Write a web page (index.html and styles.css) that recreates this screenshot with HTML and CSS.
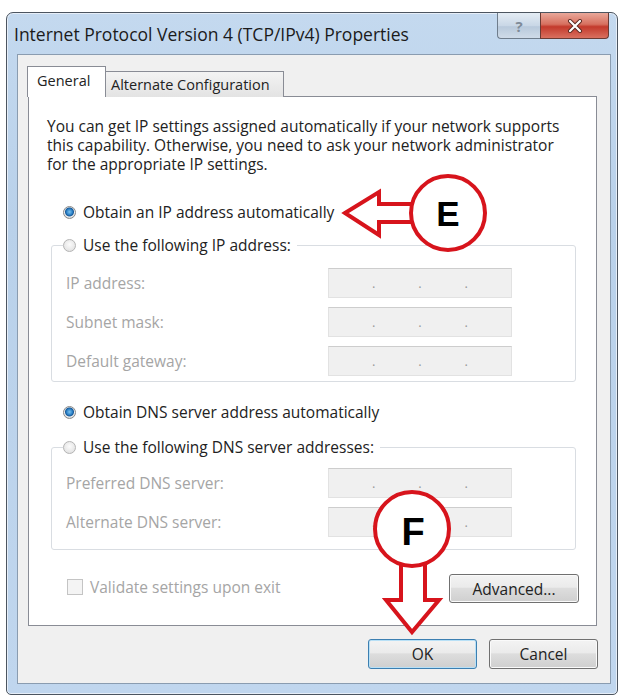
FILE: index.html
```html
<!DOCTYPE html>
<html>
<head>
<meta charset="utf-8">
<link rel="stylesheet" href="styles.css">
</head>
<body>
<div class="window">
  <div class="titlebar">
    <div class="title">Internet Protocol Version 4 (TCP/IPv4) Properties</div>
    <div class="controls">
      <div class="cbtn help">?</div>
      <div class="cbtn close">
        <svg width="16" height="14" viewBox="0 0 16 14"><path d="M3 2 L13 12 M13 2 L3 12" stroke="#5a2a22" stroke-width="4" stroke-linecap="round"/><path d="M3 2 L13 12 M13 2 L3 12" stroke="#fff" stroke-width="2.2" stroke-linecap="round"/></svg>
      </div>
    </div>
  </div>
  <div class="client">
    <div class="tabs">
      <div class="tab active">General</div>
      <div class="tab">Alternate Configuration</div>
    </div>
    <div class="panel">
      <p class="intro">You can get IP settings assigned automatically if your network supports this capability. Otherwise, you need to ask your network administrator for the appropriate IP settings.</p>
      <div class="option first"><span class="radio on"></span><span>Obtain an IP address automatically</span></div>
      <fieldset class="group ipgroup">
        <legend><span class="radio"></span><span>Use the following IP address:</span></legend>
        <div class="rows">
          <span class="lbl">IP address:</span><span class="ip"><i>.</i><i>.</i><i>.</i></span>
          <span class="lbl">Subnet mask:</span><span class="ip"><i>.</i><i>.</i><i>.</i></span>
          <span class="lbl">Default gateway:</span><span class="ip"><i>.</i><i>.</i><i>.</i></span>
        </div>
      </fieldset>
      <div class="option dns"><span class="radio on"></span><span>Obtain DNS server address automatically</span></div>
      <fieldset class="group dnsgroup">
        <legend><span class="radio"></span><span>Use the following DNS server addresses:</span></legend>
        <div class="rows">
          <span class="lbl">Preferred DNS server:</span><span class="ip"><i>.</i><i>.</i><i>.</i></span>
          <span class="lbl">Alternate DNS server:</span><span class="ip"><i>.</i><i>.</i><i>.</i></span>
        </div>
      </fieldset>
      <div class="bottomrow">
        <div class="check"><span class="box"></span><span>Validate settings upon exit</span></div>
        <div class="btn advanced">Advanced...</div>
      </div>
    </div>
    <div class="buttons">
      <div class="btn ok">OK</div>
      <div class="btn">Cancel</div>
    </div>
  </div>
</div>
<svg class="overlay" width="623" height="698" viewBox="0 0 623 698">
  <path d="M345 213 L379 192 L379 204 L416 204 L416 222 L379 222 L379 235 Z" fill="#fff" stroke="#d7141c" stroke-width="4" stroke-linejoin="miter"/>
  <circle cx="448" cy="213" r="37" fill="#fff" stroke="#d7141c" stroke-width="4"/>
  <text x="448" y="226" class="mark" font-size="35">E</text>
  <path d="M401 560 L401 600 L386 600 L412 632 L439 600 L425 600 L425 560 Z" fill="#fff" stroke="#d7141c" stroke-width="4" stroke-linejoin="miter"/>
  <circle cx="412" cy="529" r="37" fill="#fff" stroke="#d7141c" stroke-width="4"/>
  <text x="413" y="545" class="mark" font-size="38">F</text>
</svg>
</body>
</html>
```
FILE: styles.css
```css
html, body {
  margin: 0;
  padding: 0;
  background: #fff;
}
body {
  position: relative;
  width: 623px;
  height: 698px;
  overflow: hidden;
  font-family: "Open Sans", "Noto Sans", sans-serif;
  font-size: 15.5px;
  color: #1e1e1e;
}
.window {
  margin: 12px 0 0 6px;
  width: 612px;
  height: 683px;
  box-sizing: border-box;
  border: 1px solid #4c5560;
  border-radius: 7px 7px 5px 5px;
  background: linear-gradient(#c4d9ef, #b9d1ea 30%, #c0d6ee);
  box-shadow: inset 0 0 0 1px #e6eef8;
  display: flex;
  flex-direction: column;
}
.titlebar {
  height: 41px;
  display: flex;
  align-items: flex-start;
  flex-shrink: 0;
}
.title {
  padding: 10px 0 0 7px;
  line-height: 22px;
  font-size: 17.5px;
  color: #1b1b1b;
}
.controls {
  margin-left: auto;
  margin-right: 8px;
  display: flex;
}
.cbtn {
  height: 26px;
  box-sizing: border-box;
  border: 1px solid #6f7d8c;
  border-top: none;
  display: flex;
  align-items: center;
  justify-content: center;
}
.help {
  width: 43px;
  border-radius: 0 0 0 4px;
  background: linear-gradient(#e4ecf4, #c9d7e6 50%, #b8c9db 55%, #cfdbe8);
  color: #7f8b98;
  font-weight: bold;
  font-size: 15px;
  border-right: none;
}
.close {
  width: 69px;
  border-radius: 0 0 4px 0;
  background: linear-gradient(#e9a89a, #d7705f 45%, #c33a2c 55%, #d9705f);
  border-color: #6b3b34;
}
.client {
  flex: 1;
  margin: 0 6px 10px 10px;
  border: 1px solid #8a9cb0;
  background: #f0f0f0;
  padding: 11px 13px 0 9px;
  display: flex;
  flex-direction: column;
}
.tabs {
  display: flex;
  align-items: flex-end;
  height: 31px;
  position: relative;
  z-index: 1;
  margin-bottom: -1px;
}
.tab {
  height: 26px;
  box-sizing: border-box;
  border: 1px solid #898c95;
  border-bottom: none;
  background: linear-gradient(#f3f3f3, #e3e3e3);
  padding: 0 5px;
  font-size: 14.5px;
  line-height: 25px;
  color: #222;
  white-space: nowrap;
}
.tab + .tab {
  border-left: none;
  width: 178px;
}
.tab.active {
  height: 31px;
  width: 79px;
  background: #fff;
  padding-left: 9px;
  line-height: 28px;
}
.panel {
  margin-left: 1px;
  border: 1px solid #898c95;
  background: #fff;
  padding: 20px 20px 22px 21px;
  display: flex;
  flex-direction: column;
}
.intro {
  margin: 0 0 0 -3px;
  line-height: 19px;
  color: #222;
}
.option {
  display: flex;
  align-items: center;
  line-height: 19px;
  margin-left: 13px;
  color: #222;
}
.option.first { margin-top: 29px; }
.option.dns { margin-top: 21px; }
.radio {
  width: 13px;
  height: 13px;
  box-sizing: border-box;
  border-radius: 50%;
  border: 1px solid #b4b4b4;
  background: radial-gradient(circle at 50% 40%, #fbfbfb, #dcdcdc);
  margin-right: 7px;
  flex-shrink: 0;
}
.radio.on {
  border-color: #8a8a8a;
  background: radial-gradient(circle at 50% 45%, #7cc4f0 0, #2a7ec4 3px, #1a5c9a 4px, #f1f1f1 5px, #d4d4d4 6px);
}
.group {
  margin: 14px 0 0 1px;
  padding: 0 14px;
  border: 1px solid #d9dde2;
  border-radius: 3px;
  min-width: 0;
}
.group legend {
  display: flex;
  align-items: center;
  line-height: 19px;
  padding: 0 6px 0 0;
  margin-left: -3px;
  color: #222;
}
.rows {
  display: grid;
  grid-template-columns: 262px 184px;
  row-gap: 9px;
  align-items: center;
}
.ipgroup .rows { margin-top: 13px; padding-bottom: 5px; }
.dnsgroup { margin-top: 16px; }
.dnsgroup .rows { margin-top: 11px; padding-bottom: 12px; }
.lbl {
  color: #a5a5a5;
}
.ip {
  height: 30px;
  box-sizing: border-box;
  border: 1px solid #e2e2e2;
  border-top-color: #cdcdcd;
  background: #f0f0f0;
  display: flex;
  justify-content: space-evenly;
  align-items: center;
}
.ip i {
  font-style: normal;
  color: #9a9a9a;
  font-size: 13px;
  line-height: 13px;
}
.bottomrow {
  margin-top: 24px;
  display: flex;
  align-items: center;
  justify-content: space-between;
}
.check {
  display: flex;
  align-items: center;
  margin-left: 17px;
  color: #a5a5a5;
  margin-top: -4px;
}
.box {
  width: 16px;
  height: 16px;
  box-sizing: border-box;
  border: 1px solid #c4c4c4;
  background: #f4f4f4;
  margin-right: 7px;
}
.btn {
  height: 30px;
  box-sizing: border-box;
  border: 1px solid #707070;
  border-radius: 3px;
  background: linear-gradient(#f3f3f3, #ebebeb 45%, #dddddd 50%, #cfcfcf);
  box-shadow: inset 0 0 0 1px #fafafa;
  display: flex;
  align-items: center;
  justify-content: center;
  width: 109px;
  color: #222;
}
.advanced {
  width: 130px;
  height: 29px;
  margin-right: -3px;
}
.buttons {
  margin-top: 13px;
  display: flex;
  justify-content: flex-end;
  gap: 12px;
  margin-right: -1px;
}
.btn.ok {
  border-color: #3c7fb1;
  box-shadow: inset 0 0 0 1px #b8e0f6;
}
.overlay {
  position: absolute;
  left: 0;
  top: 0;
  pointer-events: none;
}
.mark {
  font-family: "Liberation Sans", Arial, sans-serif;
  font-weight: bold;
  text-anchor: middle;
  fill: #000;
}
```
